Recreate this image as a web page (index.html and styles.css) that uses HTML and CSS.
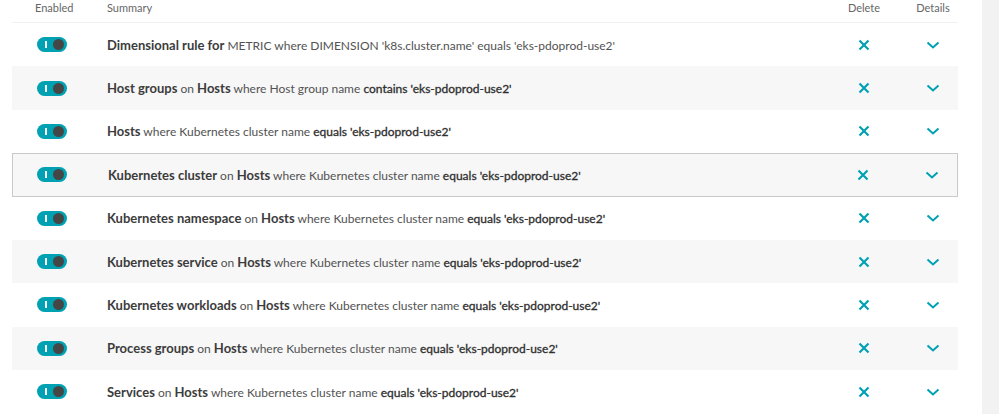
FILE: index.html
```html
<!DOCTYPE html>
<html>
<head>
<meta charset="utf-8">
<link rel="stylesheet" href="styles.css">
</head>
<body>
<div class="page">
  <div class="main">
    <div class="table">
      <div class="row head">
        <div class="c-en">Enabled</div>
        <div class="c-sum">Summary</div>
        <div class="c-del">Delete</div>
        <div class="c-det">Details</div>
      </div>

      <div class="row">
        <div class="c-en"><span class="toggle"><span class="bar"></span><span class="knob"></span></span></div>
        <div class="c-sum"><b>Dimensional rule for</b> METRIC where DIMENSION 'k8s.cluster.name' equals 'eks-pdoprod-use2'</div>
        <div class="c-del"><svg class="x" viewBox="0 0 12 12"><path d="M1.5 1.5L10.5 10.5M10.5 1.5L1.5 10.5"/></svg></div>
        <div class="c-det"><svg class="chev" viewBox="0 0 14 8"><path d="M1.5 1.5L7 6.5L12.5 1.5"/></svg></div>
      </div>

      <div class="row alt">
        <div class="c-en"><span class="toggle"><span class="bar"></span><span class="knob"></span></span></div>
        <div class="c-sum"><b>Host groups</b> on <b>Hosts</b> where Host group name <em>contains 'eks-pdoprod-use2'</em></div>
        <div class="c-del"><svg class="x" viewBox="0 0 12 12"><path d="M1.5 1.5L10.5 10.5M10.5 1.5L1.5 10.5"/></svg></div>
        <div class="c-det"><svg class="chev" viewBox="0 0 14 8"><path d="M1.5 1.5L7 6.5L12.5 1.5"/></svg></div>
      </div>

      <div class="row">
        <div class="c-en"><span class="toggle"><span class="bar"></span><span class="knob"></span></span></div>
        <div class="c-sum"><b>Hosts</b> where Kubernetes cluster name <em>equals 'eks-pdoprod-use2'</em></div>
        <div class="c-del"><svg class="x" viewBox="0 0 12 12"><path d="M1.5 1.5L10.5 10.5M10.5 1.5L1.5 10.5"/></svg></div>
        <div class="c-det"><svg class="chev" viewBox="0 0 14 8"><path d="M1.5 1.5L7 6.5L12.5 1.5"/></svg></div>
      </div>

      <div class="row hover">
        <div class="c-en"><span class="toggle"><span class="bar"></span><span class="knob"></span></span></div>
        <div class="c-sum"><b>Kubernetes cluster</b> on <b>Hosts</b> where Kubernetes cluster name <em>equals 'eks-pdoprod-use2'</em></div>
        <div class="c-del"><svg class="x" viewBox="0 0 12 12"><path d="M1.5 1.5L10.5 10.5M10.5 1.5L1.5 10.5"/></svg></div>
        <div class="c-det"><svg class="chev" viewBox="0 0 14 8"><path d="M1.5 1.5L7 6.5L12.5 1.5"/></svg></div>
      </div>

      <div class="row">
        <div class="c-en"><span class="toggle"><span class="bar"></span><span class="knob"></span></span></div>
        <div class="c-sum"><b>Kubernetes namespace</b> on <b>Hosts</b> where Kubernetes cluster name <em>equals 'eks-pdoprod-use2'</em></div>
        <div class="c-del"><svg class="x" viewBox="0 0 12 12"><path d="M1.5 1.5L10.5 10.5M10.5 1.5L1.5 10.5"/></svg></div>
        <div class="c-det"><svg class="chev" viewBox="0 0 14 8"><path d="M1.5 1.5L7 6.5L12.5 1.5"/></svg></div>
      </div>

      <div class="row alt">
        <div class="c-en"><span class="toggle"><span class="bar"></span><span class="knob"></span></span></div>
        <div class="c-sum"><b>Kubernetes service</b> on <b>Hosts</b> where Kubernetes cluster name <em>equals 'eks-pdoprod-use2'</em></div>
        <div class="c-del"><svg class="x" viewBox="0 0 12 12"><path d="M1.5 1.5L10.5 10.5M10.5 1.5L1.5 10.5"/></svg></div>
        <div class="c-det"><svg class="chev" viewBox="0 0 14 8"><path d="M1.5 1.5L7 6.5L12.5 1.5"/></svg></div>
      </div>

      <div class="row">
        <div class="c-en"><span class="toggle"><span class="bar"></span><span class="knob"></span></span></div>
        <div class="c-sum"><b>Kubernetes workloads</b> on <b>Hosts</b> where Kubernetes cluster name <em>equals 'eks-pdoprod-use2'</em></div>
        <div class="c-del"><svg class="x" viewBox="0 0 12 12"><path d="M1.5 1.5L10.5 10.5M10.5 1.5L1.5 10.5"/></svg></div>
        <div class="c-det"><svg class="chev" viewBox="0 0 14 8"><path d="M1.5 1.5L7 6.5L12.5 1.5"/></svg></div>
      </div>

      <div class="row alt">
        <div class="c-en"><span class="toggle"><span class="bar"></span><span class="knob"></span></span></div>
        <div class="c-sum"><b>Process groups</b> on <b>Hosts</b> where Kubernetes cluster name <em>equals 'eks-pdoprod-use2'</em></div>
        <div class="c-del"><svg class="x" viewBox="0 0 12 12"><path d="M1.5 1.5L10.5 10.5M10.5 1.5L1.5 10.5"/></svg></div>
        <div class="c-det"><svg class="chev" viewBox="0 0 14 8"><path d="M1.5 1.5L7 6.5L12.5 1.5"/></svg></div>
      </div>

      <div class="row">
        <div class="c-en"><span class="toggle"><span class="bar"></span><span class="knob"></span></span></div>
        <div class="c-sum"><b>Services</b> on <b>Hosts</b> where Kubernetes cluster name <em>equals 'eks-pdoprod-use2'</em></div>
        <div class="c-del"><svg class="x" viewBox="0 0 12 12"><path d="M1.5 1.5L10.5 10.5M10.5 1.5L1.5 10.5"/></svg></div>
        <div class="c-det"><svg class="chev" viewBox="0 0 14 8"><path d="M1.5 1.5L7 6.5L12.5 1.5"/></svg></div>
      </div>
    </div>
  </div>
  <div class="gutter"></div>
</div>
</body>
</html>
```

FILE: styles.css
```css
html, body {
  margin: 0;
  padding: 0;
  background: #ffffff;
}
body {
  font-family: Lato, "Open Sans", "Liberation Sans", sans-serif;
  color: #454646;
  overflow: hidden;
}
.page {
  display: flex;
  height: 414px;
  overflow: hidden;
}
.main {
  width: 982px;
  flex: none;
}
.gutter {
  flex: 1;
  background: #f2f2f2;
}
.table {
  margin-left: 12px;
  width: 946px;
}
.row {
  display: grid;
  grid-template-columns: 95px 1fr 88px 50px;
  align-items: center;
  height: 43.375px;
  box-sizing: border-box;
  font-size: 13px;
}
.row.head {
  height: 23px;
  font-size: 11px;
  color: #666666;
  align-items: start;
  padding-top: 1px;
  border-bottom: 1px solid #f0f0f0;
  line-height: 14px;
}
.row.alt {
  background: #f7f7f7;
}
.row.hover {
  background: #f7f7f7;
  border: 1px solid #c9c9c9;
}
.c-en {
  padding-left: 25px;
  display: flex;
  align-items: center;
}
.row.head .c-en { padding-left: 23px; }
.row.hover .c-en { padding-left: 24px; }
.c-sum {
  white-space: nowrap;
  color: #525252;
  font-size: 12px;
}
.head .c-sum {
  font-size: 11px;
  color: #666666;
}
.head .c-en { color: #666666; }
.c-sum b {
  color: #3c3c3c;
  font-weight: 700;
  font-size: 13px;
}
.c-sum em {
  font-style: normal;
  font-weight: 400;
  color: #2e2e2e;
  -webkit-text-stroke: 0.3px #2e2e2e;
}
.c-del, .c-det {
  display: flex;
  justify-content: center;
  align-items: center;
}
.toggle {
  position: relative;
  display: block;
  width: 30px;
  height: 15px;
  border-radius: 8px;
  background: #00a1b2;
}
.bar {
  position: absolute;
  left: 8px;
  top: 4px;
  width: 1.5px;
  height: 7px;
  background: #ffffff;
}
.knob {
  position: absolute;
  right: 3px;
  top: 2px;
  width: 11px;
  height: 11px;
  border-radius: 50%;
  background: #454646;
}
.x {
  width: 12px;
  height: 12px;
  fill: none;
  stroke: #00a1b2;
  stroke-width: 2.2;
}
.chev {
  width: 14px;
  height: 8px;
  fill: none;
  stroke: #00a1b2;
  stroke-width: 2;
}
```
